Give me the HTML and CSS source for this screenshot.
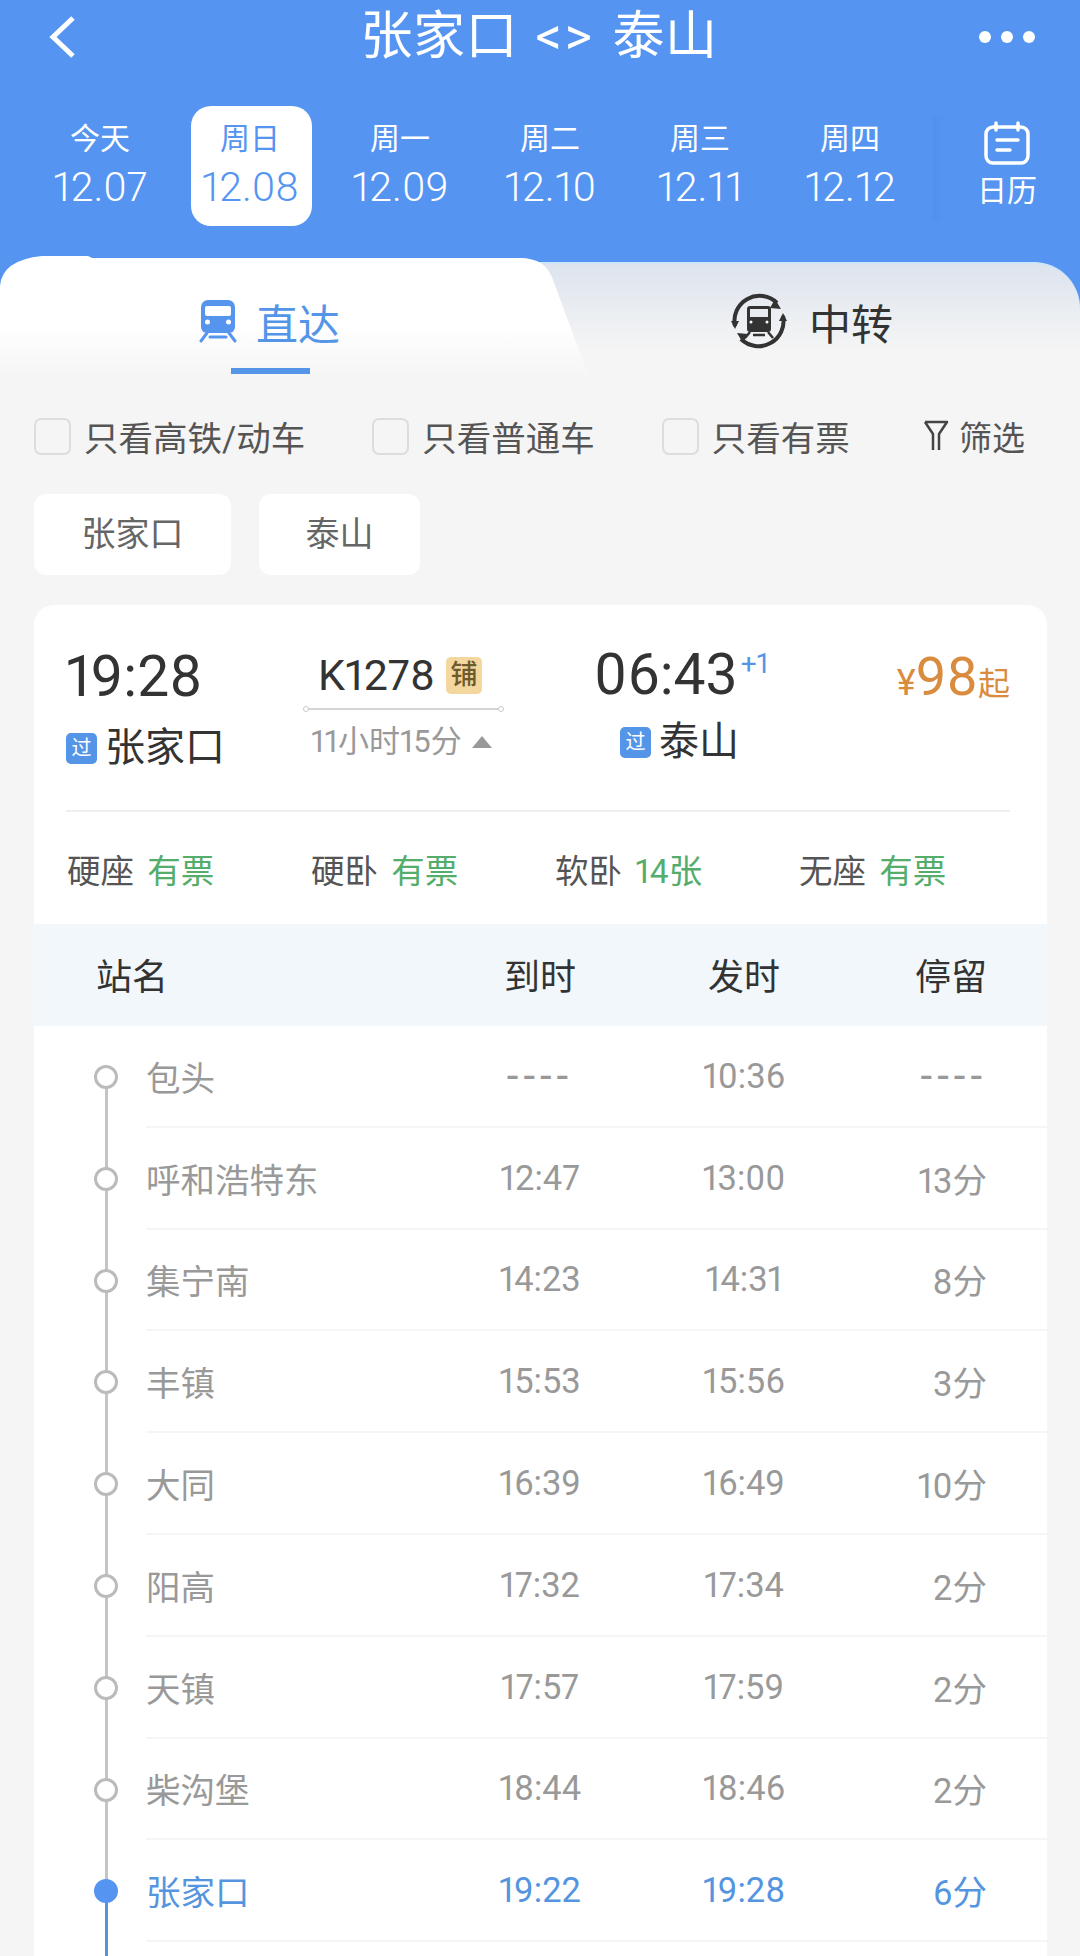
FILE: index.html
```html
<!DOCTYPE html>
<html lang="zh-CN">
<head>
<meta charset="utf-8">
<title>张家口 &lt;&gt; 泰山</title>
<link rel="stylesheet" href="styles.css">
</head>
<body>

<header class="top">
	<div class="nav">
		<svg class="back" width="30" height="44" viewBox="0 0 30 44"><path d="M26 3 L6 22 L26 41" fill="none" stroke="#fff" stroke-width="5"/></svg>
		<div class="title">张家口 <span class="arrows">&lt;&gt;</span> 泰山</div>
		<div class="more"><i></i><i></i><i></i></div>
	</div>
	<div class="dates">
		<div class="day"><span class="wk">今天</span><span class="dt">12.07</span></div>
		<div class="day on"><span class="wk">周日</span><span class="dt">12.08</span></div>
		<div class="day"><span class="wk">周一</span><span class="dt">12.09</span></div>
		<div class="day"><span class="wk">周二</span><span class="dt">12.10</span></div>
		<div class="day"><span class="wk">周三</span><span class="dt">12.11</span></div>
		<div class="day"><span class="wk">周四</span><span class="dt">12.12</span></div>
		<div class="cal">
			<svg width="46" height="44" viewBox="0 0 46 44" fill="none" stroke="#fff" stroke-width="3.5" stroke-linecap="round"><rect x="2" y="6" width="42" height="36" rx="7"/><path d="M12 2v7M34 2v7M13 19h21M13 29h13"/></svg>
			<span>日历</span>
		</div>
	</div>
</header>

<div class="tab-bar">
	<svg class="tab-shape" width="600" height="124" viewBox="0 0 600 124">
		<defs><linearGradient id="tabfill" x1="0" y1="0" x2="0" y2="1"><stop offset="0.55" stop-color="#fff"/><stop offset="1" stop-color="#f5f5f5"/></linearGradient></defs>
		<path d="M0 124 V30 Q2 4 42 0 H88 L92 2 H520 Q546 2 553 24 L590 124 Z" fill="url(#tabfill)"/>
	</svg>
	<div class="tab-row">
		<div class="tab tab-on">
			<svg width="38" height="43" viewBox="0 0 38 43"><path d="M9 0h20a7 7 0 0 1 7 7v20a6 6 0 0 1-6 6H8a6 6 0 0 1-6-6V7a7 7 0 0 1 7-7z" fill="#5595ee"/><rect x="6" y="6" width="26" height="10" rx="2" fill="#fff"/><circle cx="8.500" cy="22" r="2.500" fill="#fff"/><circle cx="29.500" cy="22" r="2.500" fill="#fff"/><path d="M8 33 L2 41 M30 33 L36 41 M11 37h16" stroke="#5595ee" stroke-width="3" stroke-linecap="round"/></svg>
			<span>直达</span>
			<i class="tab-line"></i>
		</div>
		<div class="tab tab-off">
			<svg width="56" height="56" viewBox="0 0 56 56"><g fill="none" stroke="#333" stroke-width="4"><path d="M4 33 A25 25 0 0 1 46 10"/><path d="M52 23 A25 25 0 0 1 10 46"/></g><path d="M44 6 L50 16 L39 15 Z M12 50 L6 40 L17 41 Z M0 28 L8 28 L4 36 Z M48 28 L56 28 L52 20 Z" fill="#333"/><path d="M19 13h18a3 3 0 0 1 3 3v20a3 3 0 0 1-3 3H19a3 3 0 0 1-3-3V16a3 3 0 0 1 3-3z" fill="#333"/><rect x="19" y="16" width="18" height="8" fill="#e8ecf1"/><circle cx="20" cy="29" r="1.500" fill="#fff"/><circle cx="36" cy="29" r="1.500" fill="#fff"/><path d="M19 39 L14 45 M37 39 L42 45 M22 42h12" stroke="#333" stroke-width="2.500"/></svg>
			<span>中转</span>
		</div>
	</div>
</div>

<div class="filters">
	<label class="check"><i></i>只看高铁/动车</label>
	<label class="check"><i></i>只看普通车</label>
	<label class="check"><i></i>只看有票</label>
	<div class="filter-btn">
		<svg width="26" height="32" viewBox="0 0 26 32" fill="none" stroke="#444" stroke-width="2.500" stroke-linejoin="round"><path d="M2 2h22L16 14v16M2 2l8 12v16"/></svg>
		<span>筛选</span>
	</div>
</div>

<div class="chips">
	<div class="chip chip-a">张家口</div>
	<div class="chip chip-b">泰山</div>
</div>

<section class="card">
	<div class="summary">
		<div class="leg leg-from">
			<div class="time">19:28</div>
			<div class="place"><i class="pass">过</i>张家口</div>
		</div>
		<div class="train">
			<div class="train-no">K1278<i class="berth">铺</i></div>
			<div class="train-rule"></div>
			<div class="dur">11小时15分<i class="up"></i></div>
		</div>
		<div class="leg leg-to">
			<div class="time">06:43<sup>+1</sup></div>
			<div class="place"><i class="pass">过</i>泰山</div>
		</div>
		<div class="price"><small>¥</small>98<em>起</em></div>
	</div>

	<div class="seats">
		<div class="seat">硬座 <b>有票</b></div>
		<div class="seat">硬卧 <b>有票</b></div>
		<div class="seat">软卧 <b>14张</b></div>
		<div class="seat">无座 <b>有票</b></div>
	</div>

	<div class="grid-line head">
		<span class="name">站名</span><span>到时</span><span>发时</span><span class="stay">停留</span>
	</div>

	<div class="stop first">
		<i class="rail"></i><i class="dot"></i>
		<div class="grid-line"><span class="name">包头</span><span class="dash">----</span><span>10:36</span><span class="stay dash">----</span></div>
	</div>
	<div class="stop">
		<i class="rail"></i><i class="dot"></i>
		<div class="grid-line"><span class="name">呼和浩特东</span><span>12:47</span><span>13:00</span><span class="stay">13分</span></div>
	</div>
	<div class="stop">
		<i class="rail"></i><i class="dot"></i>
		<div class="grid-line"><span class="name">集宁南</span><span>14:23</span><span>14:31</span><span class="stay">8分</span></div>
	</div>
	<div class="stop">
		<i class="rail"></i><i class="dot"></i>
		<div class="grid-line"><span class="name">丰镇</span><span>15:53</span><span>15:56</span><span class="stay">3分</span></div>
	</div>
	<div class="stop">
		<i class="rail"></i><i class="dot"></i>
		<div class="grid-line"><span class="name">大同</span><span>16:39</span><span>16:49</span><span class="stay">10分</span></div>
	</div>
	<div class="stop">
		<i class="rail"></i><i class="dot"></i>
		<div class="grid-line"><span class="name">阳高</span><span>17:32</span><span>17:34</span><span class="stay">2分</span></div>
	</div>
	<div class="stop">
		<i class="rail"></i><i class="dot"></i>
		<div class="grid-line"><span class="name">天镇</span><span>17:57</span><span>17:59</span><span class="stay">2分</span></div>
	</div>
	<div class="stop">
		<i class="rail"></i><i class="dot"></i>
		<div class="grid-line"><span class="name">柴沟堡</span><span>18:44</span><span>18:46</span><span class="stay">2分</span></div>
	</div>
	<div class="stop here">
		<i class="rail"></i><i class="dot"></i>
		<div class="grid-line"><span class="name">张家口</span><span>19:22</span><span>19:28</span><span class="stay">6分</span></div>
	</div>
</section>

</body>
</html>
```

FILE: styles.css
```css
html, body {
	margin: 0;
	padding: 0;
	height: 1956px;
	overflow: hidden;
}

body {
	width: 1080px;
	background-color: #f5f5f5;
	font-family: Roboto, "Noto Sans CJK SC", sans-serif;
	font-variant-numeric: proportional-nums;
	color: #333;
}

i, em {
	font-style: normal;
}

/* header */
.top {
	height: 256px;
	background-color: #5595f1;
	color: #fff;
	overflow: hidden;
}

.nav {
	display: flex;
	align-items: center;
	height: 74px;
	padding: 0 45px 0 47px;
	justify-content: space-between;
}

.title {
	font-size: 52px;
	line-height: 74px;
	letter-spacing: 0.5px;
	word-spacing: 4px;
	padding-left: 22px;
}

.arrows {
	letter-spacing: 3px;
}

.more {
	display: flex;
	gap: 10px;
}

.more i {
	width: 12px;
	height: 12px;
	border-radius: 50%;
	background-color: #fff;
}

.dates {
	display: flex;
	margin-top: 32px;
	padding-left: 25px;
}

.day {
	width: 150px;
	height: 120px;
	position: relative;
	display: flex;
	flex-direction: column;
	align-items: center;
}

.day.on::before {
	content: "";
	position: absolute;
	top: 0;
	left: 16px;
	width: 121px;
	height: 120px;
	border-radius: 20px;
	background-color: #fff;
}

.wk, .dt {
	position: relative;
}

.wk {
	font-size: 30px;
	line-height: 40px;
	margin-top: 13px;
}

.dt {
	font-size: 41px;
	font-weight: 300;
	line-height: 48px;
	margin-top: 4px;
}

.day.on .wk, .day.on .dt {
	color: #5595f1;
}

.cal {
	display: flex;
	flex-direction: column;
	align-items: center;
	width: 146px;
	height: 100px;
	margin: 10px 0 0 8px;
	padding-top: 5px;
	background: linear-gradient(to right, rgba(70, 130, 220, 0.2), rgba(70, 130, 220, 0) 14px);
}

.cal svg {
	display: block;
	margin-left: 2px;
}

.cal span {
	font-size: 30px;
	line-height: 40px;
	margin: 6px 0 0 2px;
}

/* tabs */
.tab-bar {
	position: relative;
	height: 124px;
	padding-top: 6px;
	box-sizing: border-box;
	background-color: #5595f1;
}

.tab-shape {
	position: absolute;
	top: 0;
	left: 0;
}

.tab-row {
	display: flex;
	height: 118px;
	box-sizing: border-box;
	border-top: 2px solid #cfe6fa;
	border-radius: 46px 46px 0 0;
	background: linear-gradient(#dde4ee, #f5f5f5 75%);
}

.tab {
	position: relative;
	width: 540px;
	box-sizing: border-box;
	display: flex;
	align-items: center;
	height: 114px;
	font-size: 42px;
}

.tab-on {
	padding-left: 199px;
	gap: 19px;
	color: #5595e8;
}

.tab-off {
	padding-left: 191px;
	gap: 22px;
}

.tab-line {
	position: absolute;
	left: 231px;
	top: 104px;
	width: 79px;
	height: 6px;
	background-color: #5595e8;
}

/* filter row */
.filters {
	display: flex;
	align-items: center;
	height: 38px;
	margin-top: 37px;
	padding: 0 55px 0 34px;
	gap: 67px;
	font-size: 34.500px;
	color: #555;
}

.check {
	display: flex;
	align-items: center;
	gap: 13px;
}

.check i {
	width: 33px;
	height: 33px;
	border: 2px solid #ddd;
	border-radius: 7px;
}

.filter-btn {
	display: flex;
	align-items: center;
	gap: 10px;
	margin-left: auto;
	font-size: 33px;
}

/* station chips */
.chips {
	display: flex;
	gap: 28px;
	margin: 39px 0 0 34px;
}

.chip {
	height: 81px;
	line-height: 81px;
	text-align: center;
	border-radius: 12px;
	background-color: #fff;
	font-size: 34px;
	color: #666;
}

.chip-a {
	width: 197px;
}

.chip-b {
	width: 161px;
}

/* train card */
.card {
	margin: 30px 33px 0 34px;
	padding-bottom: 60px;
	background-color: #fff;
	border-radius: 20px 20px 0 0;
}

.summary {
	display: flex;
	height: 207px;
	box-sizing: border-box;
	margin: 0 37px 0 32px;
	border-bottom: 2px solid #eee;
}

.leg-from {
	width: 237px;
}

.leg-to {
	width: 296px;
	margin-left: 90px;
}

.time {
	font-size: 57px;
	line-height: 70px;
	margin-top: 37px;
}

.leg-to .time {
	margin-top: 35px;
}

.time sup {
	position: absolute;
	font-size: 28px;
	line-height: 1;
	margin: 10px 0 0 3px;
	color: #5595e8;
}

.place {
	display: flex;
	align-items: center;
	font-size: 40px;
	line-height: 56px;
	margin-top: 8px;
}

.leg-to .place {
	margin: 4px 0 0 26px;
}

.pass {
	width: 31px;
	height: 31px;
	line-height: 30px;
	margin-right: 8px;
	text-align: center;
	border-radius: 5px;
	background-color: #5595e8;
	color: #fff;
	font-size: 20px;
}

.train {
	width: 201px;
}

.train-no {
	display: flex;
	align-items: center;
	height: 46px;
	margin: 47px 0 0 15px;
	font-size: 43px;
}

.berth {
	width: 36px;
	height: 37px;
	margin-left: 11px;
	line-height: 36px;
	text-align: center;
	border-radius: 5px;
	background-color: #f3d79e;
	color: #6f5a2c;
	font-size: 27px;
	font-weight: 500;
}

.train-rule {
	position: relative;
	height: 2px;
	margin-top: 10px;
	background-color: #d4d4d4;
}

.train-rule::before, .train-rule::after {
	content: "";
	position: absolute;
	top: -2px;
	width: 6px;
	height: 6px;
	box-sizing: border-box;
	border: 1px solid #ccc;
	border-radius: 50%;
	background-color: #fff;
}

.train-rule::before {
	left: 0;
}

.train-rule::after {
	right: 0;
}

.dur {
	display: flex;
	align-items: center;
	margin: 11px 0 0 8px;
	font-size: 31px;
	line-height: 42px;
	color: #999;
}

.up {
	width: 0;
	height: 0;
	margin-left: 10px;
	border-left: 10px solid transparent;
	border-right: 10px solid transparent;
	border-bottom: 12px solid #999;
}

.price {
	margin-left: auto;
	margin-top: 37px;
	font-size: 54px;
	line-height: 70px;
	color: #d98b3e;
}

.price small {
	font-size: 36px;
}

.price em {
	font-size: 32px;
}

/* seats */
.seats {
	display: flex;
	height: 112px;
	align-items: center;
	padding-left: 33px;
	font-size: 33.500px;
	color: #555;
}

.seat {
	width: 244px;
}

.seat b {
	font-weight: 400;
	color: #55ad6c;
	margin-left: 5px;
}

/* stops table */
.grid-line {
	display: grid;
	grid-template-columns: 292px 204px 204px 141px;
	align-items: center;
	text-align: center;
	font-size: 34.500px;
}

.grid-line .name {
	text-align: left;
}

.grid-line .stay {
	text-align: right;
}

.grid-line .dash {
	letter-spacing: 5px;
	font-size: 42px;
}

.head {
	height: 102px;
	padding: 0 0 3px 62px;
	box-sizing: border-box;
	grid-template-columns: 342px 204px 204px 141px;
	background-color: #f2f7fc;
	color: #333;
	font-size: 36px;
}

.stop {
	position: relative;
	height: 101.8px;
	padding-left: 112px;
	box-sizing: border-box;
	color: #999;
}

.stop .grid-line {
	height: 101.8px;
	box-sizing: border-box;
	border-bottom: 2px solid #f5f5f5;
}

.dot {
	position: absolute;
	z-index: 1;
	left: 60px;
	top: 39px;
	width: 24px;
	height: 24px;
	box-sizing: border-box;
	border: 3px solid #bbb;
	border-radius: 50%;
	background-color: #fff;
}

.rail {
	position: absolute;
	left: 71px;
	top: -51px;
	width: 3px;
	height: 102px;
	background-color: #c4c4c4;
}

.first .rail {
	display: none;
}

.here {
	color: #5595e0;
}

.here .dot {
	border-color: #5595f1;
	background-color: #5595f1;
}

.here::after {
	content: "";
	position: absolute;
	left: 71px;
	top: 62px;
	width: 3px;
	height: 80px;
	background-color: #5595e0;
}
```
